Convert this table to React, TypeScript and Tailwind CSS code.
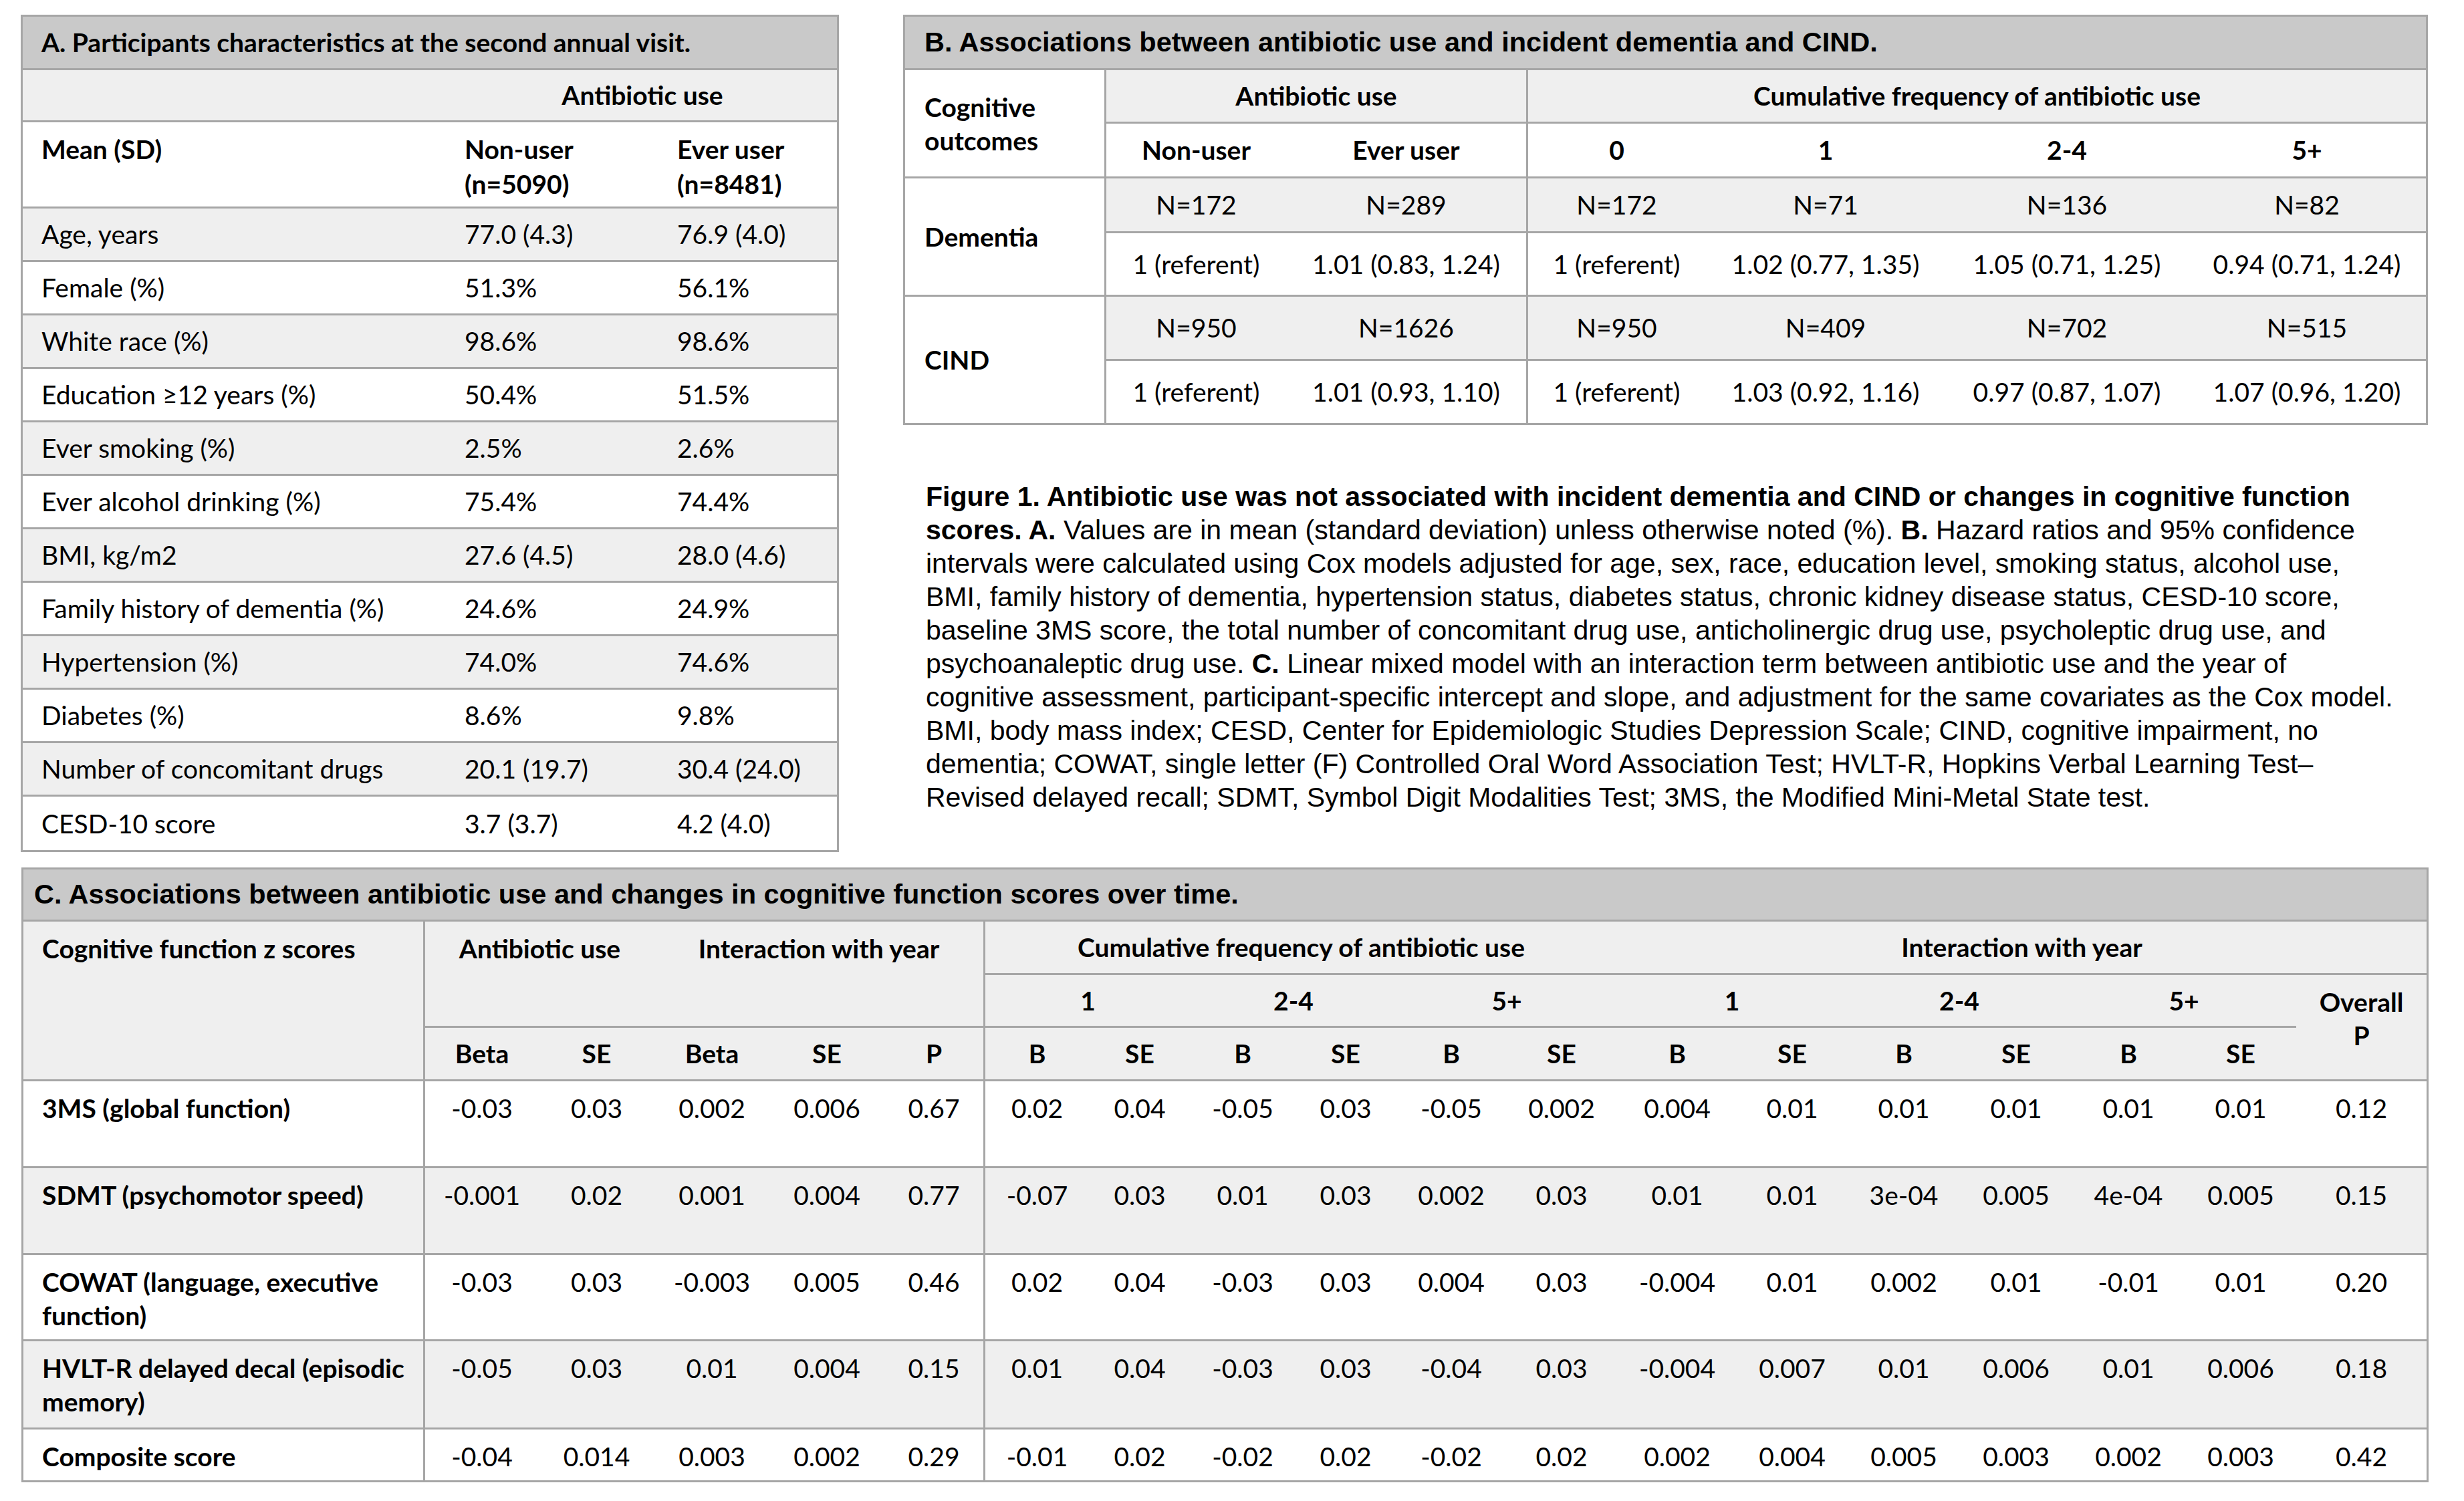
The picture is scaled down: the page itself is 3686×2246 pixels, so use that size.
import React from 'react';

const CAL = "font-['Lato',sans-serif]";
const ARIAL = "font-['Liberation_Sans',Arial,sans-serif]";
const BOT = 'border-b-[3px] border-[#a6a6a6]';
const LEFT = 'border-l-[3px] border-[#a6a6a6]';
const GRAY = 'bg-[#efefef]';

const rowsA = [
  ['Age, years', '77.0 (4.3)', '76.9 (4.0)'],
  ['Female (%)', '51.3%', '56.1%'],
  ['White race (%)', '98.6%', '98.6%'],
  ['Education ≥12 years (%)', '50.4%', '51.5%'],
  ['Ever smoking (%)', '2.5%', '2.6%'],
  ['Ever alcohol drinking (%)', '75.4%', '74.4%'],
  ['BMI, kg/m2', '27.6 (4.5)', '28.0 (4.6)'],
  ['Family history of dementia (%)', '24.6%', '24.9%'],
  ['Hypertension (%)', '74.0%', '74.6%'],
  ['Diabetes (%)', '8.6%', '9.8%'],
  ['Number of concomitant drugs', '20.1 (19.7)', '30.4 (24.0)'],
  ['CESD-10 score', '3.7 (3.7)', '4.2 (4.0)'],
];

function PanelA() {
  return (
    <section className={`w-[1224px] shrink-0 border-[3px] border-[#a6a6a6] ${CAL} text-[39px] text-black`}>
      <h2 className={`h-[80px] bg-[#c9c9c9] ${BOT} flex items-center pl-[28px] font-bold text-[39px] whitespace-nowrap`}>
        A. Participants characteristics at the second annual visit.
      </h2>
      <div className="grid grid-cols-[636px_318px_264px] grid-rows-[78px_129px_repeat(12,80px)] whitespace-nowrap">
        <div className={`${GRAY} ${BOT}`} />
        <div className={`col-span-2 ${GRAY} ${BOT} flex items-center justify-center font-bold`}>Antibiotic use</div>
        <div className={`${BOT} pl-[28px] pt-[14px] leading-[52px] font-bold`}>Mean (SD)</div>
        <div className={`${BOT} pl-[25px] pt-[14px] leading-[52px] font-bold`}>Non-user<br />(n=5090)</div>
        <div className={`${BOT} pl-[25px] pt-[14px] leading-[52px] font-bold`}>Ever user<br />(n=8481)</div>
        {rowsA.map((r, i) => {
          const bg = i % 2 === 0 ? GRAY : 'bg-white';
          const b = i < rowsA.length - 1 ? BOT : '';
          return (
            <React.Fragment key={r[0]}>
              <div className={`${bg} ${b} flex items-center pl-[28px]`}>{r[0]}</div>
              <div className={`${bg} ${b} flex items-center pl-[25px]`}>{r[1]}</div>
              <div className={`${bg} ${b} flex items-center pl-[25px]`}>{r[2]}</div>
            </React.Fragment>
          );
        })}
      </div>
    </section>
  );
}

const rowsB = [
  { label: 'Dementia', n: ['N=172', 'N=289', 'N=172', 'N=71', 'N=136', 'N=82'], hr: ['1 (referent)', '1.01 (0.83, 1.24)', '1 (referent)', '1.02 (0.77, 1.35)', '1.05 (0.71, 1.25)', '0.94 (0.71, 1.24)'] },
  { label: 'CIND', n: ['N=950', 'N=1626', 'N=950', 'N=409', 'N=702', 'N=515'], hr: ['1 (referent)', '1.01 (0.93, 1.10)', '1 (referent)', '1.03 (0.92, 1.16)', '0.97 (0.87, 1.07)', '1.07 (0.96, 1.20)'] },
];

function PanelB() {
  return (
    <section className={`w-[2281px] border-[3px] border-[#a6a6a6] ${CAL} text-[39px] text-black`}>
      <h2 className={`h-[80px] bg-[#c9c9c9] ${BOT} flex items-center pl-[29px] font-bold text-[41.5px] ${ARIAL} whitespace-nowrap`}>
        B. Associations between antibiotic use and incident dementia and CIND.
      </h2>
      <div className="grid grid-cols-[298px_272px_359px_268px_360px_362px_356px] grid-rows-[80px_82px_82px_95px_96px_93px] whitespace-nowrap">
        <div className={`row-span-2 ${BOT} bg-white flex items-center pl-[29px] font-bold leading-[50px]`}>Cognitive<br />outcomes</div>
        <div className={`col-span-2 ${GRAY} ${BOT} ${LEFT} flex items-center justify-center font-bold`}>Antibiotic use</div>
        <div className={`col-span-4 ${GRAY} ${BOT} ${LEFT} flex items-center justify-center font-bold`}>Cumulative frequency of antibiotic use</div>
        {['Non-user', 'Ever user', '0', '1', '2-4', '5+'].map((h, i) => (
          <div key={h} className={`${BOT} ${i === 0 || i === 2 ? LEFT : ''} flex items-center justify-center font-bold`}>{h}</div>
        ))}
        {rowsB.map((r, ri) => (
          <React.Fragment key={r.label}>
            <div className={`row-span-2 ${ri === 0 ? BOT : ''} bg-white flex items-center pl-[29px] font-bold`}>{r.label}</div>
            {r.n.map((v, i) => (
              <div key={'n' + i} className={`${GRAY} ${BOT} ${i === 0 || i === 2 ? LEFT : ''} flex items-center justify-center`}>{v}</div>
            ))}
            {r.hr.map((v, i) => (
              <div key={'h' + i} className={`bg-white ${ri === 0 ? BOT : ''} ${i === 0 || i === 2 ? LEFT : ''} flex items-center justify-center`}>{v}</div>
            ))}
          </React.Fragment>
        ))}
      </div>
    </section>
  );
}

function Caption() {
  return (
    <p className={`mt-[82px] ml-[34px] ${ARIAL} text-[41px] leading-[50px] text-black whitespace-nowrap`}>
      <b>Figure 1. Antibiotic use was not associated with incident dementia and CIND or changes in cognitive function</b>
      <br />
      <b>scores. A.</b> Values are in mean (standard deviation) unless otherwise noted (%). <b>B.</b> Hazard ratios and 95% confidence
      <br />
      intervals were calculated using Cox models adjusted for age, sex, race, education level, smoking status, alcohol use,
      <br />
      BMI, family history of dementia, hypertension status, diabetes status, chronic kidney disease status, CESD-10 score,
      <br />
      baseline 3MS score, the total number of concomitant drug use, anticholinergic drug use, psycholeptic drug use, and
      <br />
      psychoanaleptic drug use. <b>C.</b> Linear mixed model with an interaction term between antibiotic use and the year of
      <br />
      cognitive assessment, participant-specific intercept and slope, and adjustment for the same covariates as the Cox model.
      <br />
      BMI, body mass index; CESD, Center for Epidemiologic Studies Depression Scale; CIND, cognitive impairment, no
      <br />
      dementia; COWAT, single letter (F) Controlled Oral Word Association Test; HVLT-R, Hopkins Verbal Learning Test–
      <br />
      Revised delayed recall; SDMT, Symbol Digit Modalities Test; 3MS, the Modified Mini-Metal State test.
    </p>
  );
}

const rowsC = [
  { label: ['3MS (global function)'], v: ['-0.03', '0.03', '0.002', '0.006', '0.67', '0.02', '0.04', '-0.05', '0.03', '-0.05', '0.002', '0.004', '0.01', '0.01', '0.01', '0.01', '0.01', '0.12'] },
  { label: ['SDMT (psychomotor speed)'], v: ['-0.001', '0.02', '0.001', '0.004', '0.77', '-0.07', '0.03', '0.01', '0.03', '0.002', '0.03', '0.01', '0.01', '3e-04', '0.005', '4e-04', '0.005', '0.15'] },
  { label: ['COWAT (language, executive', 'function)'], v: ['-0.03', '0.03', '-0.003', '0.005', '0.46', '0.02', '0.04', '-0.03', '0.03', '0.004', '0.03', '-0.004', '0.01', '0.002', '0.01', '-0.01', '0.01', '0.20'] },
  { label: ['HVLT-R delayed decal (episodic', 'memory)'], v: ['-0.05', '0.03', '0.01', '0.004', '0.15', '0.01', '0.04', '-0.03', '0.03', '-0.04', '0.03', '-0.004', '0.007', '0.01', '0.006', '0.01', '0.006', '0.18'] },
  { label: ['Composite score'], v: ['-0.04', '0.014', '0.003', '0.002', '0.29', '-0.01', '0.02', '-0.02', '0.02', '-0.02', '0.02', '0.002', '0.004', '0.005', '0.003', '0.002', '0.003', '0.42'] },
];

function PanelC() {
  const sub = ['Beta', 'SE', 'Beta', 'SE', 'P', 'B', 'SE', 'B', 'SE', 'B', 'SE', 'B', 'SE', 'B', 'SE', 'B', 'SE'];
  return (
    <section className={`ml-px w-[3601px] border-[3px] border-[#a6a6a6] ${CAL} text-[39px] text-black`}>
      <h2 className={`h-[78px] bg-[#c9c9c9] ${BOT} flex items-center pl-[16px] font-bold text-[41.5px] ${ARIAL} whitespace-nowrap`}>
        C. Associations between antibiotic use and changes in cognitive function scores over time.
      </h2>
      <div className="grid grid-cols-[598px_173px_173px_172px_172px_148px_158px_152px_156px_152px_164px_166px_180px_164px_170px_166px_170px_166px_195px] grid-rows-[80px_79px_80px_130px_130px_129px_132px_76px] whitespace-nowrap">
        <div className={`row-span-3 ${GRAY} ${BOT} pl-[28px] pt-[15px] leading-[50px] font-bold`}>Cognitive function z scores</div>
        <div className={`col-span-2 row-span-2 ${GRAY} ${BOT} ${LEFT} flex justify-center pt-[15px] leading-[50px] font-bold`}>Antibiotic use</div>
        <div className={`col-span-3 row-span-2 ${GRAY} ${BOT} flex justify-center pt-[15px] leading-[50px] font-bold`}>Interaction with year</div>
        <div className={`col-span-6 ${GRAY} ${BOT} ${LEFT} flex items-center justify-center font-bold`}>Cumulative frequency of antibiotic use</div>
        <div className={`col-span-7 ${GRAY} ${BOT} flex items-center justify-center font-bold`}>Interaction with year</div>
        {['1', '2-4', '5+', '1', '2-4', '5+'].map((h, i) => (
          <div key={i} className={`col-span-2 ${GRAY} ${BOT} ${i === 0 ? LEFT : ''} flex items-center justify-center font-bold`}>{h}</div>
        ))}
        <div className={`row-span-2 ${GRAY} ${BOT} flex flex-col items-center pt-[15px] leading-[50px] font-bold`}>
          <span>Overall</span>
          <span>P</span>
        </div>
        {sub.map((h, i) => (
          <div key={i} className={`${GRAY} ${BOT} ${i === 0 || i === 5 ? LEFT : ''} flex items-center justify-center font-bold`}>{h}</div>
        ))}
        {rowsC.map((r, ri) => {
          const bg = ri % 2 === 1 ? GRAY : 'bg-white';
          const b = ri < rowsC.length - 1 ? BOT : '';
          return (
            <React.Fragment key={r.label[0]}>
              <div className={`${bg} ${b} pl-[28px] pt-[15px] leading-[50px] font-bold`}>
                {r.label.map(l => <div key={l}>{l}</div>)}
              </div>
              {r.v.map((v, i) => (
                <div key={i} className={`${bg} ${b} ${i === 0 || i === 5 ? LEFT : ''} flex justify-center pt-[15px] leading-[50px]`}>{v}</div>
              ))}
            </React.Fragment>
          );
        })}
      </div>
    </section>
  );
}

export default function App(): React.ReactElement {
  return (
    <div className="w-[3686px] min-h-[2246px] bg-white pl-[31px] pt-[22px]">
      <div className="flex gap-[96px]">
        <PanelA />
        <div className="flex flex-col">
          <PanelB />
          <Caption />
        </div>
      </div>
      <div className="mt-[23px]">
        <PanelC />
      </div>
    </div>
  );
}
